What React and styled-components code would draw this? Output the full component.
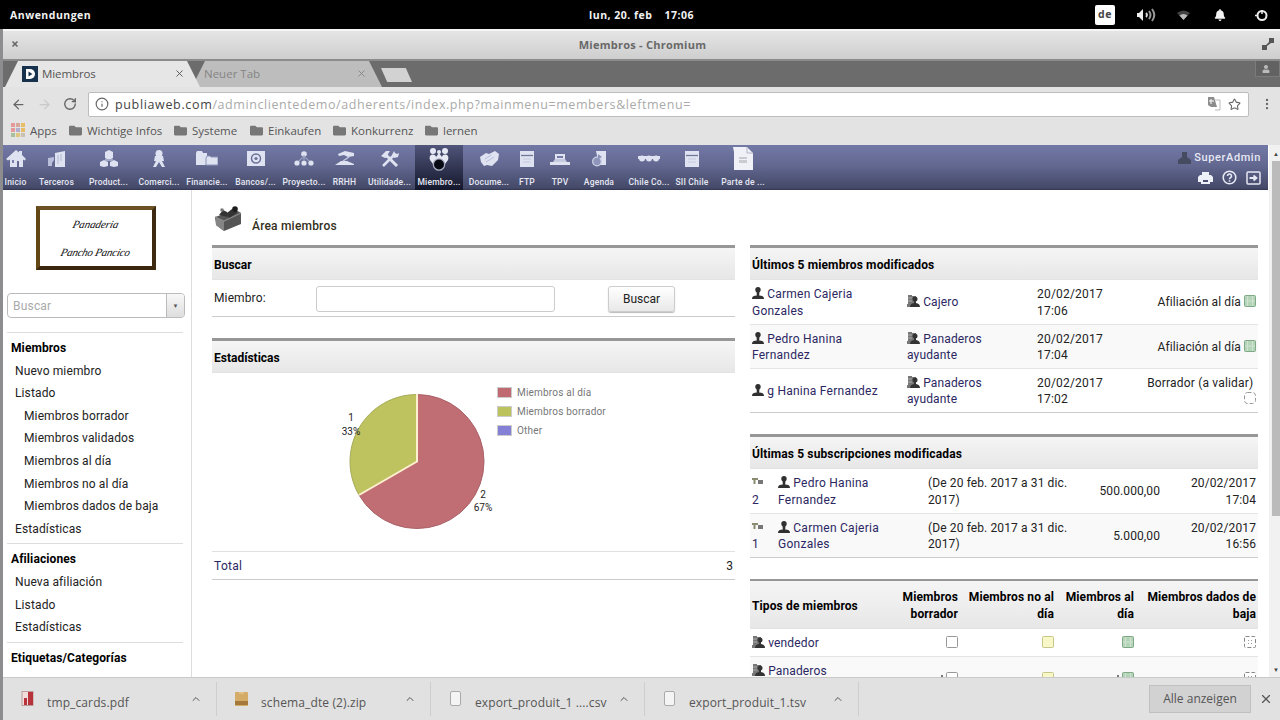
import React from 'react';
import styled, { createGlobalStyle, css } from 'styled-components';
import { FaFolder, FaUser, FaBell } from 'react-icons/fa';
import { ArrowLeft, ArrowRight, RotateCw, Info, Star, X, ChevronUp, EllipsisVertical } from 'lucide-react';

const GlobalStyle = createGlobalStyle`
  * { box-sizing: border-box; }
  body { margin: 0; background: #fff; overflow: hidden; }
  svg { display: block; flex: none; }
`;

const Screen = styled.div`
  width: 1280px;
  height: 720px;
  display: flex;
  flex-direction: column;
  overflow: hidden;
  white-space: nowrap;
  color: #222;
  font-family: Roboto, "Liberation Sans", sans-serif;
  font-size: 12px;
`;

/* desktop bar */
const DesktopBar = styled.div`
  height: 29px;
  flex: none;
  background: #000;
  color: #f2f2f2;
  display: grid;
  grid-template-columns: 1fr auto 1fr;
  align-items: center;
  padding: 1px 0 0 10px;
  font: bold 10.5px "Open Sans", sans-serif;
  letter-spacing: 0.5px;
`;

const Clock = styled.div`
  display: flex;
  gap: 12px;
  padding-right: 7px;
`;

const Tray = styled.div`
  justify-self: end;
  display: flex;
  align-items: center;
`;

const TrayItem = styled.span`
  width: ${p => p.$w}px;
  display: flex;
  justify-content: center;
`;

const Lang = styled.span`
  width: 20px;
  height: 20px;
  border-radius: 2px;
  background: #fff;
  color: #444;
  text-align: center;
  line-height: 18px;
`;

/* browser window */
const Window = styled.div`
  flex: 1;
  min-height: 0;
  display: flex;
  flex-direction: column;
  border-left: 3px solid #8d8d90;
  background: #e3e3e3;
`;

const TitleBar = styled.div`
  height: 32px;
  flex: none;
  display: grid;
  grid-template-columns: 1fr auto 1fr;
  align-items: center;
  padding: 0 6px 2px 8px;
  border-top: 2px solid #f5f5f5;
  border-bottom: 2px solid #8b8b8b;
  background: linear-gradient(#e5e5e5, #cecece);
  color: #686868;
  font: bold 11px "Open Sans", sans-serif;
  letter-spacing: 0.25px;
`;

const TabStrip = styled.div`
  height: 26px;
  flex: none;
  display: flex;
  background: #6c6c6c;
`;

const Tab = styled.div`
  position: relative;
  width: ${p => p.$w}px;
  margin-left: ${p => p.$ml}px;
  z-index: ${p => (p.$active ? 2 : 1)};
  display: flex;
  align-items: center;
  padding: 0 15px 1px ${p => (p.$active ? 17 : 12)}px;
  color: ${p => (p.$active ? '#555' : '#858585')};
  background: ${p => (p.$active ? '#e6e6e6' : '#bdbdbd')};
  clip-path: polygon(13px 0, calc(100% - 13px) 0, 100% 100%, 0 100%);
  font: 11.5px "Open Sans", sans-serif;
  letter-spacing: ${p => (p.$active ? -0.1 : 0)}px;
  svg:last-child { margin-left: auto; }
  svg:first-child { margin-right: 4px; }
`;

const NewTab = styled.div`
  width: 31px;
  height: 14px;
  margin: 7px 0 0 -1px;
  background: #d2d2d2;
  clip-path: polygon(0 0, 80% 0, 100% 100%, 20% 100%);
`;

const ProfileButton = styled.div`
  margin-left: auto;
  width: 25px;
  height: 16px;
  display: flex;
  align-items: center;
  justify-content: center;
  padding-right: 3px;
  border: 1px solid #7b7b7b;
  border-top: 0;
  background: #626262;
  color: #bbb;
`;

const Toolbar = styled.div`
  height: 32px;
  flex: none;
  display: flex;
  align-items: center;
  padding: 2px 6px 0 8px;
  color: #666;
`;

const NavButtons = styled.div`
  width: 77px;
  display: flex;
  gap: 11px;
  svg:nth-child(2) { opacity: 0.2; }
`;

const AddressBar = styled.div`
  flex: 1;
  height: 25px;
  display: flex;
  align-items: center;
  padding: 0 7px 0 6px;
  border: 1px solid #bdbdbd;
  border-radius: 2px;
  background: #fff;
  font: 12.5px "Open Sans", sans-serif;
  margin-right: 11px;
`;

const Url = styled.span`
  flex: 1;
  margin-left: 6px;
  color: #aaa;
  letter-spacing: 0.58px;
  b { color: #444; font-weight: normal; letter-spacing: 0.65px; }
`;

const Translate = styled.span`
  display: flex;
  margin-right: 7px;
`;

const Bookmarks = styled.div`
  height: 25px;
  flex: none;
  display: flex;
  align-items: center;
  padding: 0 0 3px 8px;
  color: #555;
  font: 11.5px "Open Sans", sans-serif;
`;

const Bookmark = styled.div`
  width: ${p => p.$w}px;
  display: flex;
  align-items: center;
  gap: 5px;
  svg { color: #777; }
`;

/* page */
const Viewport = styled.div`
  flex: 1;
  min-height: 0;
  display: flex;
  margin-top: 1px;
  background: #fff;
`;

const Page = styled.div`
  width: 1265px;
  display: flex;
  flex-direction: column;
  overflow: hidden;
`;

const Scrollbar = styled.div`
  width: 12px;
  padding: 0 0 0 3px;
  display: flex;
  flex-direction: column;
  background: #f1f1f1;
  border-left: 1px solid #fff;
`;

const ScrollArrow = styled.div`
  height: 16px;
  display: flex;
  align-items: center;
  justify-content: center;
  font-size: 6px;
  color: #444;
`;

const ScrollThumb = styled.div`
  height: 355px;
  margin-bottom: auto;
  background: #bbb;
`;

const TopMenu = styled.div`
  height: 45px;
  flex: none;
  display: flex;
  background: linear-gradient(#7379a6, #626890 45%, #444968 96%, #303450);
  color: #e6e8f3;
`;

const MenuEntry = styled.div`
  width: ${p => p.$w}px;
  display: flex;
  flex-direction: column;
  align-items: center;
  padding-top: 3px;
  font-size: 8.5px;
  font-weight: 500;
  letter-spacing: 0.2px;
  ${p => p.$active && css`background: linear-gradient(#50557a, #14172b);`}
`;

const MenuIcon = styled.span`
  height: 21px;
  margin-bottom: 8px;
  display: flex;
  align-items: center;
`;

const UserBox = styled.div`
  margin-left: auto;
  padding: 6px 7px 0 0;
  display: flex;
  flex-direction: column;
  align-items: flex-end;
  gap: 6px;
  font-size: 11px;
  font-weight: 500;
  letter-spacing: 0.6px;
`;

const UserLine = styled.div`
  display: flex;
  align-items: center;
  gap: ${p => p.$gap}px;
`;

const Body = styled.div`
  flex: 1;
  min-height: 0;
  display: flex;
`;

const Sidebar = styled.div`
  width: 189px;
  flex: none;
  padding: 16px 7px 0 4px;
  border-right: 1px solid #ddd;
`;

const Logo = styled.div`
  width: 120px;
  height: 64px;
  margin-left: 28.5px;
  border: 4px solid;
  border-color: #6d5023 #3d2a10 #3a270e #644717;
  display: flex;
  flex-direction: column;
  align-items: center;
  justify-content: space-around;
  color: #111;
  font: italic 11px "Liberation Serif", cursive;
`;

const Signature = styled.span`
  letter-spacing: ${p => p.$ls}px;
  transform: skewX(-14deg);
`;

const QuickSearch = styled.div`
  width: 178px;
  height: 25px;
  margin: 23px 0 14px;
  display: flex;
  align-items: center;
  justify-content: space-between;
  border: 1px solid #bbb;
  border-radius: 4px;
  padding-left: 5px;
  color: #aaa;
  letter-spacing: 0.2px;
`;

const DropArrow = styled.span`
  width: 18px;
  height: 23px;
  display: flex;
  align-items: center;
  justify-content: center;
  border-left: 1px solid #bbb;
  border-radius: 0 3px 3px 0;
  background: linear-gradient(#f8f8f8, #ddd);
  color: #555;
  font-size: 6px;
`;

const MenuBlock = styled.div`
  width: 176px;
  border-top: 1px solid #ddd;
  padding: 4px 0 3px 4px;
`;

const MenuLink = styled.div`
  height: 22.6px;
  line-height: 23.5px;
  padding-left: ${p => [0, 4, 13][p.$level]}px;
  font-weight: ${p => (p.$level ? 400 : 700)};
  color: ${p => (p.$level ? '#222' : '#000')};
  letter-spacing: ${p => (p.$level ? 0.12 : 0.1)}px;
`;

const Main = styled.div`
  flex: 1;
  padding: 13px 10px 0 20px;
`;

const Heading = styled.div`
  height: 42px;
  display: flex;
  padding-left: 2px;
  gap: 10px;
  color: #332f1c;
  font-weight: 500;
  line-height: 46px;
  letter-spacing: 0.2px;
  svg { margin-top: 3px; }
`;

const Columns = styled.div`
  display: grid;
  grid-template-columns: 523px 508px;
  column-gap: 15px;
  align-items: start;
`;

const Box = styled.div`
  border-top: ${p => p.$line || 3}px solid #979797;
  border-bottom: ${p => (p.$open ? 0 : 1)}px solid #ccc;
  margin-bottom: ${p => p.$mb || 0}px;
`;

const BoxTitle = styled.div`
  height: ${p => p.$h || 32}px;
  display: grid;
  grid-template-columns: ${p => p.$cols || '1fr'};
  align-items: center;
  padding: 3px 2px 0;
  border-bottom: 1px solid #e3e3e3;
  background: linear-gradient(#f5f5f5, #e7e7e7);
  color: #000;
  font-weight: 700;
  line-height: 17px;
`;

const Row = styled.div`
  height: ${p => p.$h || 44}px;
  display: grid;
  grid-template-columns: ${p => p.$cols};
  align-items: center;
  padding: 1px 2px 0;
  line-height: 16.5px;
  background: ${p => (p.$alt ? '#f9f9f9' : '#fff')};
  & + & { border-top: 1px solid #e4e4e4; }
`;

const TotalRow = styled(Row)`
  border-top: 1px solid #e0e0e0;
`;

const Cell = styled.div`
  text-align: ${p => (p.$right ? 'right' : 'left')};
  color: ${p => (p.$link ? '#2b2762' : 'inherit')};
  letter-spacing: ${p => (p.$ls === undefined ? 0.12 : p.$ls)}px;
  svg { display: inline-block; vertical-align: -1px; }
`;

const TextInput = styled.div`
  width: 239px;
  height: 26px;
  border: 1px solid #ccc;
  border-radius: 3px;
`;

const Button = styled.div`
  width: 67px;
  height: 26px;
  line-height: 25px;
  text-align: center;
  border: 1px solid #ccc;
  border-radius: 3px;
  background: linear-gradient(#fff, #e8e8e8);
  box-shadow: 0 1px 1px #bbb;
`;

/* downloads */
const DownloadBar = styled.div`
  height: 43px;
  flex: none;
  display: flex;
  align-items: center;
  border-top: 1px solid #c9c9c9;
  background: #e1e1e1;
  color: #555;
  font: 12px "Open Sans", sans-serif;
`;

const Download = styled.div`
  width: 214px;
  height: 34px;
  display: flex;
  align-items: center;
  padding: 0 14px 0 18px;
  border-right: 1px solid #cecece;
  svg:last-child { margin-left: auto; }
`;

const DownloadName = styled.span`
  margin: 7px 0 0 12px;
  letter-spacing: 0.12px;
`;

const ShowAll = styled.div`
  width: 102px;
  height: 28px;
  margin: 0 8px 1px auto;
  line-height: 26px;
  text-align: center;
  border: 1px solid #c0c0c0;
  background: #d2d2d2;
`;

/* desktop icons */
const Volume = () => (
  <svg width="20" height="16" viewBox="0 0 20 16" fill="#eee">
    <path d="M1 6h2l4-4v12l-4-4H1z" />
    <path d="M10 6q2 2 0 4" fill="none" stroke="#ddd" strokeWidth="1.8" />
    <path d="M13 4q3 4 0 8M16 2q4.500 6 0 12" fill="none" stroke="#999" strokeWidth="2" />
  </svg>
);

const Wifi = () => (
  <svg width="13" height="10" viewBox="0 0 13 10">
    <path d="M0 3q6.500-5 13 0L6.500 10z" fill="#444" />
    <path d="M2.500 5.500q4-3 8 0L6.500 10z" fill="#bbb" />
  </svg>
);

const Power = () => (
  <svg width="14" height="13" viewBox="0 0 14 13" fill="none" stroke="#eee">
    <circle cx="7" cy="6.500" r="4.500" strokeWidth="2" />
    <path d="M7 1v4M0 6.500h2" strokeWidth="1.500" />
  </svg>
);

/* main menu icons */
const Glyph = ({ w = 20, h = 18, children }) => (
  <svg width={w} height={h} viewBox={`0 0 ${w} ${h}`} fill="#dfe3f1">{children}</svg>
);

const House = () => (
  <Glyph>
    <path d="M10 0l3 2.500V1h3v4l4 4-1.500 1.500L17 9.500V17h-4v-6h-2v6H4V9.500l-2 1L0 9z" />
    <path d="M6 10h2v3H6z" fill="#7b81aa" />
  </Glyph>
);

const Company = () => (
  <Glyph>
    <path d="M8 3l10-2v16H8z" />
    <path d="M1 8l6-1v3l-2 3v3H1z" fill="#b9bfdb" />
    <path d="M11 5v9M14 4v7" stroke="#b0b5d2" />
  </Glyph>
);

const Boxes = () => (
  <Glyph>
    <path d="M6 2l4-2 4 2v6l-4 2-4-2zM1 12l4-2 4 2v4l-4 1-4-1zM11 12l4-2 4 2v4l-4 1-4-1z" />
    <path d="M6 9h8v2H6z" fill="#a5abc9" />
  </Glyph>
);

const Seller = () => (
  <Glyph w={14}>
    <circle cx="7" cy="3.500" r="3.500" />
    <path d="M3 6h8l1 5h-2l3 6h-3l-3-5-3 5H1l3-6H2z" />
  </Glyph>
);

const Folders = () => (
  <Glyph w={22}>
    <path d="M0 3l1-2h5l1 2h4v12H0z" />
    <path d="M10 8l1-2h3l1 1h7v8H10z" stroke="#8d93b8" />
  </Glyph>
);

const Safe = () => (
  <Glyph w={18}>
    <path d="M0 1h18v15H0z" />
    <circle cx="9" cy="8.500" r="4.500" fill="none" stroke="#6a7098" strokeWidth="1.500" />
    <circle cx="9" cy="8.500" r="1.600" fill="#6a7098" />
  </Glyph>
);

const Tree = () => (
  <Glyph>
    <circle cx="10" cy="4" r="2.800" />
    <path d="M10 5v5M3 13l5-5h4l5 5" fill="none" stroke="#9ca2c3" strokeWidth="1.200" />
    <circle cx="3" cy="13" r="2.600" /><circle cx="10" cy="13" r="2.600" /><circle cx="17" cy="13" r="2.600" />
  </Glyph>
);

const Hands = () => (
  <Glyph>
    <path d="M3 4l7-3 9 2v3l-6 1-4-2-5 1z" />
    <path d="M0 15l6-4h6l7 3v1H8z" />
    <path d="M14 7l-6 4" stroke="#c5cae0" strokeWidth="1.500" />
  </Glyph>
);

const Tools = () => (
  <Glyph>
    <path d="M3 16L14 5" fill="none" stroke="#dfe3f1" strokeWidth="2.500" />
    <path d="M17 16L6 5" fill="none" stroke="#dfe3f1" strokeWidth="3" />
    <path d="M1 6l5-5h4L8 4v3L5 8zM12 5l2-4 1 2 2 1 2-1-1 4-4 1z" />
  </Glyph>
);

const MembersCursor = () => (
  <svg width="22" height="25" viewBox="0 0 22 25" fill="#e6e9f4">
    <circle cx="5" cy="5" r="3" /><circle cx="11" cy="6" r="2" /><circle cx="17" cy="5" r="3" />
    <path d="M2 14c-2-6 5-7 6-3l3-4 3 4c1-4 8-3 6 3l-3 4H5z" />
    <circle cx="11" cy="18.500" r="6.300" fill="#a9aec2" />
    <circle cx="11" cy="18.500" r="5" fill="#090b14" />
  </svg>
);

const Papers = () => (
  <Glyph w={21}>
    <path d="M1 7l6-4 3 1 6-3 4 3-1 6-6 6-5-1-3 1-3-4z" />
    <path d="M6 9l6-4M7 12l8-5" stroke="#b9bfd8" />
  </Glyph>
);

const Server = () => (
  <Glyph w={16}>
    <path d="M1 1h14v16H1z" />
    <path d="M2 5.500h12" stroke="#717799" strokeWidth="1.300" />
    <path d="M4 9h8M4 12h8" stroke="#c3c8de" />
  </Glyph>
);

const Till = () => (
  <Glyph>
    <path d="M5 4h10v6H5zM0 12h20v3H0z" />
    <path d="M7 6h6v2H7z" fill="#757ba4" />
    <path d="M3 12l2-3h10l2 3z" fill="#c5cae0" />
  </Glyph>
);

const Agenda = () => (
  <Glyph w={16}>
    <path d="M5 1h10v14H8z" />
    <circle cx="6" cy="11.500" r="4.300" fill="#8f95ba" stroke="#cdd2e6" strokeWidth="1.300" />
    <path d="M7 4l4 3-4 2z" fill="#8990b6" />
  </Glyph>
);

const Dots = () => (
  <Glyph w={22} h={7}>
    <rect y="1" width="22" height="3" />
    <circle cx="4" cy="3.500" r="3" /><circle cx="11" cy="3.500" r="3" /><circle cx="18" cy="3.500" r="3" />
  </Glyph>
);

const Report = () => (
  <Glyph w={20} h={23}>
    <path d="M0 0h14l6 6v17H1V5z" fill="#f0f1f6" />
    <path d="M14 0v6h6" fill="none" stroke="#b2b6cb" />
    <path d="M6 10h8v6H6z" fill="#c9cad2" />
    <path d="M6 12.500h8" stroke="#f0f1f6" />
  </Glyph>
);

const Printer = () => (
  <svg width="15" height="14" viewBox="0 0 15 14" fill="#eef0f8">
    <path d="M4 1h7v4H4zM2 4h11l2 2v5h-3v2H3v-2H0V6z" />
    <path d="M5 9h5v2H5z" fill="#4b5073" />
  </svg>
);

const Help = () => (
  <svg width="15" height="15" viewBox="0 0 15 15" fill="none" stroke="#e6e8f3" strokeWidth="1.600">
    <circle cx="7.500" cy="7.500" r="6.300" />
    <path d="M5.500 6a2 2 0 1 1 3 1.700q-1 .5-1 1.500M7.500 10.300v1.400" />
  </svg>
);

const Logout = () => (
  <svg width="15" height="14" viewBox="0 0 15 14" fill="none" stroke="#e6e8f3" strokeWidth="1.500">
    <rect x="1" y="1" width="13" height="12" rx="1" />
    <path d="M3.500 7h6M7.500 4.500L10.500 7l-3 2.500" strokeWidth="1.800" />
  </svg>
);

const UserSilhouette = () => (
  <svg width="13" height="12" viewBox="0 0 13 12" fill="#454b60">
    <path d="M4 0h5v5l4 3v4H0V8l4-3z" />
  </svg>
);

const AppLogo = () => (
  <svg width="16" height="16" viewBox="0 0 16 16">
    <rect width="16" height="16" fill="#17324c" />
    <path d="M4 3h4a5 5 0 0 1 0 10H4z" fill="#fff" />
    <path d="M6.500 5.500l4 2.500-4 2.500z" fill="#17324c" />
  </svg>
);

const AppsGrid = () => (
  <svg width="14" height="14" viewBox="0 0 14 14">
    <path d="M0 0h4v4H0zM0 5h4v4H0z" fill="#e49a98" /><path d="M5 0h4v4H5z" fill="#d9a59a" />
    <path d="M10 0h4v4h-4zM10 5h4v4h-4z" fill="#e8bd67" /><path d="M5 5h4v4H5z" fill="#b3aed0" />
    <path d="M0 10h4v4H0z" fill="#a9c09d" /><path d="M5 10h4v4H5z" fill="#dfc780" /><path d="M10 10h4v4h-4z" fill="#c9c0b0" />
  </svg>
);

const BoxIcon = () => (
  <svg width="28" height="26" viewBox="0 0 28 26">
    <path d="M1 11L22 4l5 3v11L10 25 2 19z" fill="#555" />
    <path d="M2 11l8 4v10l-8-6z" fill="#858585" />
    <path d="M1 11l9 4 17-8" fill="none" stroke="#8a8a8a" strokeWidth="1.200" />
    <path d="M5 9l4-5 4 2 1 5zM13 7l5-4 5 1v3l-8 5z" fill="#333" />
    <circle cx="8" cy="4" r="1.800" fill="#777" /><circle cx="21" cy="3" r="2.800" fill="#1c1c1c" />
  </svg>
);

const Person = () => (
  <svg width="12" height="12" viewBox="0 0 12 12" fill="#303030">
    <circle cx="6" cy="2.800" r="2.700" />
    <path d="M4.500 4h3L7.200 8.500c3 .2 4.800.8 4.800 3.500H0c0-2.700 1.800-3.300 4.800-3.500z" />
  </svg>
);

const Group = () => (
  <svg width="13" height="12" viewBox="0 0 13 12">
    <path d="M1 0h4v1h4v8H1zM0 9h8v3H0z" fill="#777" />
    <path d="M1 3h4M1 6h4" stroke="#aaa" />
    <circle cx="8" cy="4" r="2.500" fill="#333" />
    <path d="M7 5h2v3c2.500.5 4 1.500 4 4H3c0-2.500 1.500-3.500 4-4z" fill="#333" />
  </svg>
);

const CardIcon = () => (
  <svg width="12" height="11" viewBox="0 0 12 11">
    <path d="M0 1h6v2H3.500v4h-2V3H0z" fill="#8b8b71" /><rect x="6" y="3" width="5" height="4" fill="#777" />
  </svg>
);

const statusColors = {
  draft: ['#fff', '#999'],
  late: ['#f7f7c8', '#c6c68a'],
  ok: ['#b4d4b8', '#7fa986'],
  off: ['#fff', '#888'],
};

const Status = ({ kind, dashed, tick }) => (
  <svg width={tick ? 17 : 12} height="12" viewBox={tick ? '-5 0 17 12' : '0 0 12 12'}>
    <rect x="0.500" y="0.500" width="11" height="11" rx={dashed && kind === 'draft' ? 3 : 1} fill={statusColors[kind][0]}
      stroke={statusColors[kind][1]} strokeDasharray={dashed ? '4 2' : undefined} />
    {kind === 'ok' && <path d="M3.500 1v10M8.500 1v10M1 6h10" stroke="#cfe2d2" />}
    {kind === 'off' && <path d="M4 4l1 1M8 4L7 5M4 8l1-1M8 8L7 7" stroke="#999" />}
    {tick && <rect x="-5" y="3" width="2" height="7" fill="#777" />}
  </svg>
);

const FileIcon = ({ type }) => (
  <svg width="14" height="16" viewBox="0 0 14 16">
    {type === 'pdf' && <><rect x="1" y="0.500" width="11" height="14" fill="#f1dcdc" stroke="#b99" /><path d="M7 1h5v13H7zM3 7h3v7H3z" fill="#b8333b" /></>}
    {type === 'zip' && <><rect y="1" width="13" height="14" rx="1" fill="#d5ab68" /><path d="M0 10h13v4H0z" fill="#a5793c" /><path d="M4 2h5" stroke="#efd59f" /></>}
    {type === 'doc' && <rect x="1.500" y="0.500" width="10" height="14" rx="1.500" fill="#f4f4f4" stroke="#aaa" />}
  </svg>
);

const menu = [
  ['Inicio', House, 25], ['Terceros', Company, 57], ['Product...', Boxes, 47],
  ['Comerci...', Seller, 54], ['Financie...', Folders, 42], ['Bancos/...', Safe, 55],
  ['Proyecto...', Tree, 42], ['RRHH', Hands, 39], ['Utilidade...', Tools, 51],
  ['Miembro...', MembersCursor, 48], ['Docume...', Papers, 52], ['FTP', Server, 24],
  ['TPV', Till, 42], ['Agenda', Agenda, 36], ['Chile Co...', Dots, 64],
  ['SII Chile', Server, 22], ['Parte de ...', Report, 80],
];

const sideBlocks = [
  [
    ['Miembros', 0], ['Nuevo miembro', 1], ['Listado', 1], ['Miembros borrador', 2], ['Miembros validados', 2],
    ['Miembros al día', 2], ['Miembros no al día', 2], ['Miembros dados de baja', 2], ['Estadísticas', 1],
  ],
  [['Afiliaciones', 0], ['Nueva afiliación', 1], ['Listado', 1], ['Estadísticas', 1]],
  [['Etiquetas/Categorías', 0]],
];

const memberCols = '155px 130px 92px 1fr';
const members = [
  { name: ['Carmen Cajeria', 'Gonzales'], type: ['Cajero'], time: '17:06', ok: true },
  { name: ['Pedro Hanina', 'Fernandez'], type: ['Panaderos', 'ayudante'], time: '17:04', ok: true },
  { name: ['g Hanina Fernandez'], type: ['Panaderos', 'ayudante'], time: '17:02' },
];

const subCols = '26px 150px 150px 82px 1fr';
const subs = [
  ['2', 'Pedro Hanina', 'Fernandez', '500.000,00', '17:04'],
  ['1', 'Carmen Cajeria', 'Gonzales', '5.000,00', '16:56'],
];

const typeCols = '110px 96px 96px 80px 1fr';

const legend = [
  ['Miembros al día', '#c06b72'], ['Miembros borrador', '#bcc25c'], ['Other', '#8380d6'],
];

const Lines = ({ lines }) => lines.map((l, i) => <React.Fragment key={l}>{i > 0 && <br />}{l}</React.Fragment>);

const PieChart = () => (
  <svg width="523" height="178" viewBox="1 0 523 178" fontFamily="Roboto, sans-serif" fontSize="10">
    <path d="M206 88.500V21.500A67 67 0 1 1 148 122z" fill="#c06e73" stroke="#a96268" strokeWidth="1" />
    <path d="M206 88.500L148 122A67 67 0 0 1 206 21.500z" fill="#bec25f" stroke="#a6ac58" strokeWidth="1" />
    <path d="M206 21v67.500L148 122" fill="none" stroke="#fff0cf" strokeWidth="2" />
    <g fill="#222" textAnchor="middle">
      <text x="140" y="48">1</text><text x="140" y="62">33%</text>
      <text x="272" y="125">2</text><text x="272" y="138">67%</text>
    </g>
    {legend.map(([label, color], i) => (
      <g key={label}>
        <rect x="286.500" y={14.5 + i * 19} width="14" height="10" fill={color} stroke="#ccc" />
        <text x="306" y={23 + i * 19} fill="#777" letterSpacing="0.2">{label}</text>
      </g>
    ))}
  </svg>
);

function Browser() {
  return (
    <>
      <TitleBar>
        <X size={8} strokeWidth={5} />
        <span>Miembros - Chromium</span>
        <svg width="12" height="12" viewBox="0 0 12 12" style={{ justifySelf: 'end' }}>
          <path d="M7 0h5v5h-3L5 8v4H0V7h4l3-3z" fill="#555" />
        </svg>
      </TitleBar>
      <TabStrip>
        <Tab $w={195} $ml={2} $active><AppLogo />Miembros<X size={11} /></Tab>
        <Tab $w={190} $ml={-8}><span>Neuer Tab</span><X size={11} /></Tab>
        <NewTab />
        <ProfileButton><FaUser size={8} /></ProfileButton>
      </TabStrip>
      <Toolbar>
        <NavButtons>
          <ArrowLeft size={15} /><ArrowRight size={15} /><RotateCw size={14} strokeWidth={2.4} />
        </NavButtons>
        <AddressBar>
          <Info size={14} />
          <Url><b>publiaweb.com</b>/adminclientedemo/adherents/index.php?mainmenu=members&amp;leftmenu=</Url>
          <Translate>
            <svg width="14" height="14" viewBox="0 0 14 14">
              <path d="M1 0h6l3 10H4L1 8z" fill="#8c8c8c" /><path d="M8 3h5v10H8" fill="none" stroke="#bbb" />
              <path d="M2 4h5M4 2v5" stroke="#fff" />
            </svg>
          </Translate>
          <Star size={13} />
        </AddressBar>
        <EllipsisVertical size={14} />
      </Toolbar>
      <Bookmarks>
        <Bookmark $w={58}><AppsGrid />Apps</Bookmark>
        <Bookmark $w={105}><FaFolder size={13} />Wichtige Infos</Bookmark>
        <Bookmark $w={76}><FaFolder size={13} />Systeme</Bookmark>
        <Bookmark $w={83}><FaFolder size={13} />Einkaufen</Bookmark>
        <Bookmark $w={92}><FaFolder size={13} />Konkurrenz</Bookmark>
        <Bookmark $w={70}><FaFolder size={13} />lernen</Bookmark>
      </Bookmarks>
    </>
  );
}

function LeftColumn() {
  return (
    <div>
      <Box $mb={21}>
        <BoxTitle>Buscar</BoxTitle>
        <Row $h={36} $cols="102px 292px 1fr">
          <Cell>Miembro:</Cell><TextInput /><Button>Buscar</Button>
        </Row>
      </Box>
      <Box>
        <BoxTitle>Estadísticas</BoxTitle>
        <PieChart />
        <TotalRow $h={28} $cols="1fr 1fr">
          <Cell $link $ls={0.3}>Total</Cell><Cell $right>3</Cell>
        </TotalRow>
      </Box>
    </div>
  );
}

function RightColumn() {
  return (
    <div>
      <Box $mb={21}>
        <BoxTitle><Cell>Últimos 5 miembros modificados</Cell></BoxTitle>
        {members.map((m, i) => (
          <Row key={m.time} $cols={memberCols} $alt={i === 1}>
            <Cell $link $ls={0.24}><Person /> <Lines lines={m.name} /></Cell>
            <Cell $link $ls={0.15}><Group /> <Lines lines={m.type} /></Cell>
            <Cell $ls={0.2}>20/02/2017<br />{m.time}</Cell>
            <Cell $right $ls={m.ok ? 0.1 : 0.18}>
              {m.ok ? 'Afiliación al día ' : <>Borrador (a validar)&thinsp;<br /></>}
              <Status kind={m.ok ? 'ok' : 'draft'} dashed={!m.ok} />
            </Cell>
          </Row>
        ))}
      </Box>
      <Box $mb={21}>
        <BoxTitle><Cell>Últimas 5 subscripciones modificadas</Cell></BoxTitle>
        {subs.map(([id, first, last, amount, time], i) => (
          <Row key={id} $cols={subCols} $alt={i === 1}>
            <Cell $link><CardIcon /><br />{id}</Cell>
            <Cell $link $ls={0.27}><Person /> {first}<br />{last}</Cell>
            <Cell $ls={0.12}>(De 20 feb. 2017 a 31 dic.<br />2017)</Cell>
            <Cell $right $ls={0.1}>{amount}</Cell>
            <Cell $right>20/02/2017<br />{time}</Cell>
          </Row>
        ))}
      </Box>
      <Box $open $line={2}>
        <BoxTitle $h={48} $cols={typeCols}>
          <Cell>Tipos de miembros</Cell>
          <Cell $right>Miembros<br />borrador</Cell>
          <Cell $right>Miembros no al<br />día</Cell>
          <Cell $right>Miembros al<br />día</Cell>
          <Cell $right>Miembros dados de<br />baja</Cell>
        </BoxTitle>
        {['vendedor', 'Panaderos'].map((type, i) => (
          <Row key={type} $h={i ? 44 : 27} $cols={typeCols} $alt={i === 1}>
            <Cell $link $ls={0.15}><Group /> {type}{i === 1 && <><br />&nbsp;</>}</Cell>
            <Cell $right><Status kind="draft" tick={i === 1} /></Cell>
            <Cell $right><Status kind="late" /></Cell>
            <Cell $right><Status kind="ok" tick={i === 1} /></Cell>
            <Cell $right><Status kind="off" dashed /></Cell>
          </Row>
        ))}
      </Box>
    </div>
  );
}

const App = () => {
  return (
    <Screen>
      <GlobalStyle />
      <DesktopBar>
        <span>Anwendungen</span>
        <Clock><span>lun, 20. feb</span><span>17:06</span></Clock>
        <Tray>
          <TrayItem $w={34}><Lang>de</Lang></TrayItem>
          <TrayItem $w={48}><Volume /></TrayItem>
          <TrayItem $w={26}><Wifi /></TrayItem>
          <TrayItem $w={48}><FaBell size={12} /></TrayItem>
          <TrayItem $w={36}><Power /></TrayItem>
        </Tray>
      </DesktopBar>
      <Window>
        <Browser />
        <Viewport>
          <Page>
            <TopMenu>
              {menu.map(([label, Icon, w]) => (
                <MenuEntry key={label} $w={w} $active={label === 'Miembro...'}>
                  <MenuIcon><Icon /></MenuIcon>
                  {label}
                </MenuEntry>
              ))}
              <UserBox>
                <UserLine $gap={3}><UserSilhouette />SuperAdmin</UserLine>
                <UserLine $gap={9}>
                  <Printer /><Help /><Logout />
                </UserLine>
              </UserBox>
            </TopMenu>
            <Body>
              <Sidebar>
                <Logo>
                  <Signature $ls={-0.1}>Panaderia</Signature>
                  <Signature $ls={-0.25}>Pancho Pancico</Signature>
                </Logo>
                <QuickSearch>Buscar<DropArrow>▼</DropArrow></QuickSearch>
                {sideBlocks.map(items => (
                  <MenuBlock key={items[0][0]}>
                    {items.map(([label, level]) => (
                      <MenuLink key={label} $level={level}>{label}</MenuLink>
                    ))}
                  </MenuBlock>
                ))}
              </Sidebar>
              <Main>
                <Heading><BoxIcon />Área miembros</Heading>
                <Columns>
                  <LeftColumn />
                  <RightColumn />
                </Columns>
              </Main>
            </Body>
          </Page>
          <Scrollbar>
            <ScrollArrow>▲</ScrollArrow>
            <ScrollThumb />
            <ScrollArrow>▼</ScrollArrow>
          </Scrollbar>
        </Viewport>
        <DownloadBar>
          <Download><FileIcon type="pdf" /><DownloadName>tmp_cards.pdf</DownloadName><ChevronUp size={12} /></Download>
          <Download><FileIcon type="zip" /><DownloadName>schema_dte (2).zip</DownloadName><ChevronUp size={12} /></Download>
          <Download><FileIcon type="doc" /><DownloadName>export_produit_1 ....csv</DownloadName><ChevronUp size={12} /></Download>
          <Download><FileIcon type="doc" /><DownloadName>export_produit_1.tsv</DownloadName><ChevronUp size={12} /></Download>
          <ShowAll>Alle anzeigen</ShowAll>
          <X size={14} style={{ marginRight: 7 }} />
        </DownloadBar>
      </Window>
    </Screen>
  );
};

export default App;
